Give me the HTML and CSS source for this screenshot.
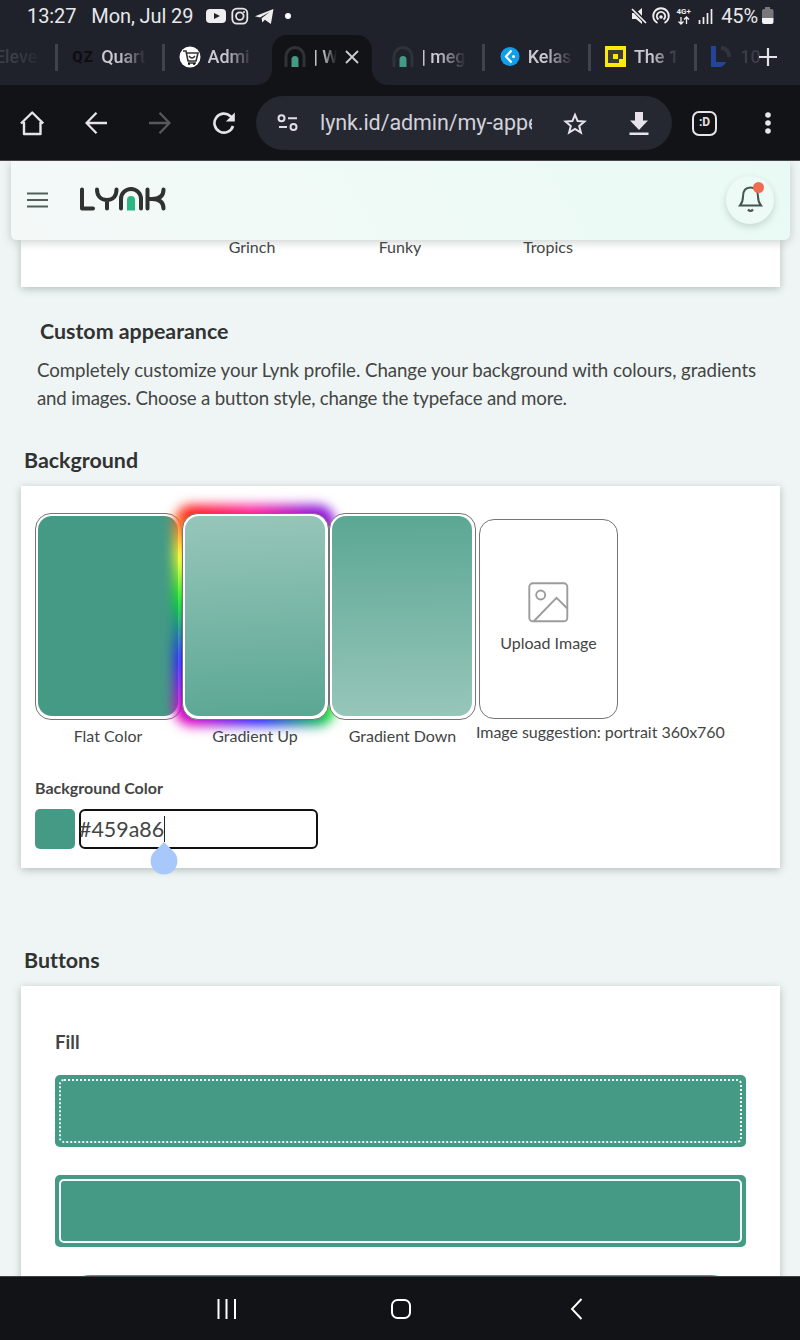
FILE: index.html
```html
<!DOCTYPE html>
<html lang="en">
<head>
<meta charset="utf-8">
<title>Lynk</title>
<link rel="stylesheet" href="styles.css">
</head>
<body>
<div class="phone">
  <header class="status">
    <span class="clock">13:27</span>
    <span class="date">Mon, Jul 29</span>
    <svg class="notif" width="90" height="20" viewBox="0 0 90 20">
      <rect x="0" y="3" width="20" height="14" rx="4" fill="#eee"/><path d="M8 7l6 3-6 3z" fill="#1f212b"/>
      <g fill="none" stroke="#e6e6e8" stroke-width="1.8"><rect x="26.300" y="2.600" width="15" height="15" rx="4.500"/><circle cx="33.800" cy="10.100" r="3.800"/></g><circle cx="38" cy="6" r="1" fill="#e6e6e8"/>
      <path d="M49 10.200L67.500 3l-2.600 15-6-4.200-2.600 2.600-.7-4.200 8-6.200-9.600 5.600z" fill="#eee"/>
      <circle cx="82" cy="10" r="3" fill="#fff"/>
    </svg>
    <svg class="radio" width="84" height="20" viewBox="0 0 84 20">
      <path d="M1 7h4l6-5v16l-6-5H1z" fill="#eee"/><path d="M0 1l15 16" stroke="#1f212b" stroke-width="4"/><path d="M1 3l14 14" stroke="#eee" stroke-width="1.700"/>
      <g fill="none" stroke="#eee" stroke-width="1.800"><path d="M26.500 17a7.800 7.800 0 1 1 7 0"/><path d="M27.500 13.500a4.200 4.200 0 1 1 5 0"/></g><circle cx="30" cy="11" r="1.800" fill="#eee"/>
      <path d="M50 11v7m-2.500-2.500L50 18l2.500-2.500M55.500 18v-7m-2.500 2.500l2.500-2.500 2.500 2.500" fill="none" stroke="#eee" stroke-width="1.300"/>
      <text x="45.500" y="8" class="net">4G+</text>
      <path d="M68.500 14v4M72.500 11v7M76.500 7v11M80.500 3v15" stroke="#eee" stroke-width="1.700"/>
    </svg>
    <span class="pct">45%</span>
    <svg class="batt" width="12" height="18" viewBox="0 0 12 18"><path d="M3 2V0h5v2h1.500a2 2 0 0 1 2 2v7H0V4a2 2 0 0 1 2-2z" fill="#77777c"/><path d="M0 11h11.500v4a2 2 0 0 1-2 2H2a2 2 0 0 1-2-2z" fill="#f4f4f4"/></svg>
  </header>

  <nav class="tabs">
    <div class="tab first"><span class="fav"></span><span class="name dim">Eleve</span></div>
    <div class="tab"><span class="fav qz">QZ</span><span class="name">Quart</span></div>
    <div class="tab"><svg class="fav" viewBox="0 0 22 22"><circle cx="11" cy="11" r="10.500" fill="#fff"/><path d="M4 5h3l2 10h8l2-8H7.500M9 17h8" fill="none" stroke="#333" stroke-width="1.600"/><circle cx="10" cy="18" r="1" /><circle cx="15" cy="18" r="1"/><path d="M10 10q3 4 6 0" fill="none" stroke="#333" stroke-width="1.300"/></svg><span class="name">Admi</span></div>
    <div class="tab active"><svg class="fav" viewBox="0 0 22 22"><path d="M2 21V10.500a9 9 0 0 1 18 0V21" fill="none" stroke="#303336" stroke-width="3"/><path d="M7.500 21v-7.500a3.500 3.500 0 0 1 7 0V21z" fill="#459a86"/></svg><span class="name short">| W</span><svg class="close" width="14" height="14" viewBox="0 0 14 14"><path d="M1 1l12 12M13 1L1 13" stroke="#ceced2" stroke-width="1.800"/></svg></div>
    <div class="tab plain"><svg class="fav" viewBox="0 0 22 22"><path d="M2 21V10.500a9 9 0 0 1 18 0V21" fill="none" stroke="#303336" stroke-width="3"/><path d="M7.500 21v-7.500a3.500 3.500 0 0 1 7 0V21z" fill="#459a86"/></svg><span class="name">| meg</span></div>
    <div class="tab"><svg class="fav" viewBox="0 0 22 22"><circle cx="11" cy="10.500" r="9.500" fill="#109fea"/><path d="M12.500 4.500L7 10.500l5.500 6" fill="none" stroke="#fff" stroke-width="2.200"/><circle cx="14.500" cy="10.500" r="1.500" fill="#fff"/></svg><span class="name">Kelas</span></div>
    <div class="tab"><svg class="fav" viewBox="0 0 22 22"><path fill="#fbe80c" d="M0 0h21v21H0z"/><path d="M3 4h15v9h-4v4H3z" fill="#3c3d31"/><path d="M8 8h5v5H8z" fill="#fbe80c"/></svg><span class="name">The 1</span></div>
    <div class="tab"><svg class="fav" viewBox="0 0 22 22"><path d="M0 0h5v16h10a8 8 0 0 1-6 5H0z" fill="#23449a"/><path d="M10 2a8 8 0 0 1 8 9" fill="none" stroke="#30343d" stroke-width="4"/></svg><span class="name dim">10</span></div>
    <svg class="plus" width="18" height="18" viewBox="0 0 18 18"><path d="M9 0v18M0 9h18" stroke="#e4e4e8" stroke-width="2.200"/></svg>
  </nav>

  <div class="toolbar">
    <svg class="t-home" width="24" height="26" viewBox="0 0 24 26"><path d="M4 12v12h16.500V12M1 13.500L12.200 2.500l11 11" fill="none" stroke="#e6e4ea" stroke-width="2.400" stroke-linejoin="round"/></svg>
    <svg class="t-back" width="22" height="22" viewBox="0 0 22 22"><path d="M11.500 .8L1.500 11l10 10.200M1.500 11H22" fill="none" stroke="#e6e4ea" stroke-width="2.300"/></svg>
    <svg class="t-fwd" width="22" height="22" viewBox="0 0 22 22"><path d="M10.500 .8l10 10.200-10 10.200M20.500 11H0" fill="none" stroke="#59595d" stroke-width="2.300"/></svg>
    <svg class="t-reload" width="22" height="22" viewBox="0 0 22 22"><path d="M20 14A9.500 9.500 0 1 1 17.500 4.200L20 7" fill="none" stroke="#e6e4ea" stroke-width="2.600"/><path d="M21.800 .5v9h-9z" fill="#e6e4ea"/></svg>
    <div class="omnibox">
      <svg class="tune" width="22" height="18" viewBox="0 0 22 18"><g fill="none" stroke="#e0dfe6" stroke-width="2"><circle cx="4.500" cy="4.300" r="3"/><path d="M11 4.300h9M2 13h8"/><circle cx="16.500" cy="13" r="3"/></g></svg>
      <span class="url">lynk.id/admin/my-appe</span>
      <svg class="star" width="24" height="24" viewBox="0 0 24 24"><path d="M12 2.800l2.600 6.300 6.800.5-5.200 4.400 1.700 6.600-5.900-3.600-5.900 3.600L7.800 14 2.600 9.600l6.800-.5z" fill="none" stroke="#e6e4ea" stroke-width="2"/></svg>
      <svg class="dl" width="20" height="24" viewBox="0 0 20 24"><path d="M6 0h8v8.500h5L10 18 1 8.500h5zM.5 20.500h19V23H.5z" fill="#e6e4ea"/></svg>
    </div>
    <div class="count">:D</div>
    <svg class="dots" width="6" height="22" viewBox="0 0 6 22"><g fill="#e8e6ec"><circle cx="3" cy="3" r="2.800"/><circle cx="3" cy="11" r="2.800"/><circle cx="3" cy="19" r="2.800"/></g></svg>
  </div>

  <main class="page">
    <div class="site-head">
      <svg class="burger" width="21" height="16" viewBox="0 0 21 16"><path d="M0 1.500h21M0 8h21M0 14.500h21" stroke="#52605b" stroke-width="2"/></svg>
      <svg class="logo" width="86" height="24" viewBox="0 0 86 24"><g fill="none" stroke="#303231" stroke-width="4" stroke-linecap="round" stroke-linejoin="round"><path d="M2 2.500V21.500H13"/><path d="M17 2.500C17 9 21 13 27 13S36.500 9 36.500 2.500M27 13v8.500"/><path d="M41 21.500V12a10 10 0 0 1 20 0v9.500"/><path d="M67.500 2.500v19M67.500 12H72C79 12 83.500 9 83.500 2.500M72 12c7 0 11.500 3 11.500 9.500"/></g><path d="M47 23.500V13a4 4 0 0 1 8 0v10.500z" fill="#2bb684"/></svg>
      <div class="bell">
        <svg width="26" height="30" viewBox="0 0 26 30"><path d="M2 21.500c2.500-3 3-5 3-9C5 6.500 8 3.500 12.500 3.500S20 6.500 20 12.500c0 4 .5 6 3 9z" fill="none" stroke="#43564f" stroke-width="2"/><path d="M10 25.500q2.500 3 5 0" fill="none" stroke="#43564f" stroke-width="2.200"/></svg>
        <i class="alert"></i>
      </div>
    </div>
    <section class="card themes"><span>Grinch</span><span>Funky</span><span>Tropics</span></section>
    <section class="intro">
      <h2>Custom appearance</h2>
      <p><span class="line-a">Completely customize your Lynk profile. Change your background with colours, gradients</span> <span class="line-b">and images. Choose a button style, change the typeface and more.</span></p>
    </section>
    <h2 class="heading bg-heading">Background</h2>
    <section class="card backgrounds">
      <div class="options">
        <div class="option"><div class="frame"><div class="fill flat"></div></div><span>Flat Color</span></div>
        <div class="option selected"><div class="frame"><div class="fill up"></div></div><span>Gradient Up</span></div>
        <div class="option"><div class="frame"><div class="fill down"></div></div><span>Gradient Down</span></div>
        <div class="upload">
          <div class="upload-box">
            <svg width="41" height="41" viewBox="0 0 41 41"><g fill="none" stroke="#9c9c9c" stroke-width="1.900"><rect x="1.300" y="1.300" width="38" height="38" rx="3.500"/><circle cx="12.700" cy="13" r="4.500"/><path d="M6 39L28.500 15.800 39.300 26.500"/></g></svg>
            <span>Upload Image</span>
          </div>
          <span class="hint">Image suggestion: portrait 360x760</span>
        </div>
      </div>
      <div class="label">Background Color</div>
      <div class="picker">
        <div class="swatch"></div>
        <div class="field"><span>#459a86</span><i class="caret"><svg class="handle" width="28" height="33" viewBox="0 0 28 33"><path d="M14 0l9.500 9.500a13.400 13.400 0 1 1-19 0z" fill="#a8c7fa"/></svg></i></div>
      </div>
    </section>
    <h2 class="heading btn-heading">Buttons</h2>
    <section class="card buttons">
      <h3>Fill</h3>
      <div class="btn dotted"><div></div></div>
      <div class="btn"><div></div></div>
      <div class="btn round"></div>
    </section>
  </main>

  <footer class="sysnav">
    <svg class="recent" width="20" height="20" viewBox="0 0 20 20"><path d="M1.500 0v20M9.500 0v20M18 0v20" stroke="#fff" stroke-width="2"/></svg>
    <svg class="homebtn" width="22" height="22" viewBox="0 0 22 22"><rect x="2" y="2" width="18" height="18" rx="5.500" fill="none" stroke="#fff" stroke-width="2"/></svg>
    <svg class="backbtn" width="13" height="22" viewBox="0 0 13 22"><path d="M11.500 1L2 11l9.500 10" fill="none" stroke="#fff" stroke-width="1.900"/></svg>
  </footer>
</div>
</body>
</html>
```
FILE: styles.css
```css
* { box-sizing: border-box; }
body { margin: 0; background: #121316; }
svg { display: block; flex: none; }
h2, h3, p { margin: 0; }
.phone { width: 800px; height: 1340px; display: flex; flex-direction: column; overflow: hidden; font-family: Lato, sans-serif; font-variant-ligatures: none; color: #434545; }

.status { flex: none; height: 32px; background: #1f212b; display: flex; align-items: center; padding: 0 26px 0 27px; font: 20px/32px Roboto, sans-serif; letter-spacing: -.1px; color: #e8e8ea; }
.date { margin-left: 15px; }
.notif { margin-left: 13px; }
.radio { margin-left: auto; }
.net { font: 700 8px Roboto, sans-serif; fill: #eee; letter-spacing: 0; }
.pct { margin-left: 6px; }
.batt { margin-left: 4px; }

.tabs { flex: none; position: relative; height: 53px; background: #1f212b; display: flex; overflow: hidden; }
.tab { flex: none; width: 106.300px; height: 53px; display: flex; align-items: center; padding: 0 0 3px 14px; position: relative; }
.tab::before { content: ""; position: absolute; left: 0; top: 12px; width: 3px; height: 27px; background: #41434a; }
.tab.first { margin-left: -51px; }
.tab.active::before, .tab.plain::before { display: none; }
.tab .fav { flex: none; width: 22px; height: 22px; margin: 0 7px 0 3px; }
.tab .qz { font: 700 15px/22px Roboto, sans-serif; color: #0c0d10; letter-spacing: 1px; }
.name { width: 45px; overflow: hidden; white-space: nowrap; font: 500 18px/24px Roboto, sans-serif; letter-spacing: -.1px; color: #c9c9cf; -webkit-mask-image: linear-gradient(90deg, #000 40%, transparent); mask-image: linear-gradient(90deg, #000 40%, transparent); }
.name.dim { color: #3b3e47; }
.first .name { width: 52px; }
.name.short { width: 24px; }
.tab.active { width: 100px; margin: 3px 3px 0 4.500px; padding: 0 0 6px 9px; height: 50px; background: #121316; border-radius: 15px 15px 0 0; }
.tab.active .close { margin-left: 8px; }
.tab.active::after { content: ""; position: absolute; left: -15px; right: -15px; bottom: 0; height: 15px; background: radial-gradient(circle at 0 0, transparent 14.500px, #121316 15px) left / 15px 15px no-repeat, radial-gradient(circle at 100% 0, transparent 14.500px, #121316 15px) right / 15px 15px no-repeat; }
.plus { position: absolute; left: 759px; top: 16px; }

.toolbar { flex: none; height: 76px; background: #121316; border-bottom: 1px solid #48454c; display: flex; align-items: center; padding: 1px 29px 0 20px; }
.t-back { margin-left: 41px; }
.t-fwd { margin-left: 42px; }
.t-reload { margin-left: 42px; }
.omnibox { margin: 0 0 1px 21px; width: 416px; height: 54px; border-radius: 27px; background: #252831; display: flex; align-items: center; padding-left: 21px; }
.url { width: 212px; margin-left: 21px; overflow: hidden; white-space: nowrap; font: 21.500px/30px Roboto, sans-serif; letter-spacing: -.08px; color: #d3d2da; }
.star { margin: 3px 0 0 31px; }
.dl { margin: 2px 0 0 42px; }
.count { width: 25px; height: 25px; margin-left: 20px; border: 2.500px solid #e6e4ea; border-radius: 7px; font: 700 12px/19px Roboto, sans-serif; text-align: center; color: #e6e4ea; }
.dots { margin-left: auto; }

.page { position: relative; flex: none; height: 1115px; overflow: hidden; background: #eff5f4; }
.site-head { position: relative; z-index: 3; height: 79px; margin: 0 10px 0 11px; padding: 0 16px 2px; display: flex; align-items: center; border-radius: 0 0 6px 6px; background: linear-gradient(60deg, #f4f9f8, #e9faf4); box-shadow: 0 2px 10px rgba(60, 90, 80, .28); }
.logo { margin: 0 0 1px 32px; }
.bell { position: relative; width: 48px; height: 48px; margin-left: auto; border-radius: 50%; background: #edfaf6; box-shadow: 0 3px 7px rgba(40, 80, 65, .2); padding: 8px 0 0 12px; }
.alert { position: absolute; left: 27px; top: 6px; width: 11px; height: 11px; border-radius: 50%; background: #ed6c52; }
.card { margin: 0 20px 0 21px; background: #fff; box-shadow: 0 2px 8px rgba(50, 80, 70, .32); }
.themes { height: 47px; padding: 0 132px 0 157px; display: flex; font-size: 16px; line-height: 14px; }
.themes span { width: 148px; text-align: center; }
.intro { padding: 30px 20px 0 37px; }
.intro h2 { padding-left: 3px; }
h2 { font-size: 21.400px; line-height: 28px; color: #313333; }
.intro p { margin-top: 11px; font-size: 18.700px; line-height: 28px; }
.line-a { letter-spacing: -.06px; }
.line-b { letter-spacing: -.19px; }
.heading { margin-left: 24px; }
.bg-heading { margin-top: 34px; margin-bottom: 12px; }

.backgrounds { height: 382px; padding: 27px 14px 0; }
.options { display: flex; height: 233px; }
.option { width: 147px; flex: none; font-size: 16px; line-height: 20px; text-align: center; position: relative; }
.option > span { display: block; margin: 6px 1px 0 0; position: relative; }
.option:nth-child(3) > span { margin-right: 0; }
.frame { position: relative; width: 147px; height: 207px; padding: 2px; border: 1px solid #757575; border-radius: 16px; }
.fill { width: 140px; height: 200px; border-radius: 14px; }
.flat { background: #459a86; }
.up { background: linear-gradient(177deg, #97c6ba, #5ba794); }
.down { background: linear-gradient(179deg, #5ba794, #97c6ba); }
.selected .frame, .option:nth-child(3) .frame { background: #fff; }
.selected::before { content: ""; position: absolute; left: -8px; top: -8px; width: 161px; height: 221px; border-radius: 18px; filter: blur(6px); background: linear-gradient(37deg, #e000c0 5%, #2222ff 21%, #00e020 38%, #ffff20 51%, #ff1818 66%, #ff1a9a 80%, #8a12d8 94%); }
.upload { width: 260px; }
.upload-box { margin: 6px 0 0 3px; width: 139px; height: 200px; border: 1px solid #757575; border-radius: 15px; padding-top: 62px; display: flex; flex-direction: column; align-items: center; gap: 9px; font-size: 16px; line-height: 22px; }
.hint { display: block; margin-top: 3px; font-size: 16px; line-height: 20px; white-space: nowrap; letter-spacing: -.04px; }
.label { margin-top: 32px; font-size: 16px; line-height: 20px; font-weight: 700; height: 31px; }
.picker { display: flex; gap: 4px; }
.swatch { width: 40px; height: 40px; border-radius: 5px; background: #459a86; }
.field { width: 239px; height: 40px; border: 2px solid #111; border-radius: 6px; display: flex; align-items: center; font-size: 21.400px; line-height: 26px; }
.field span { margin-left: -2px; }
.caret { position: relative; width: 1px; height: 26px; background: #222; }
.handle { position: absolute; left: -14px; top: 26px; }
.btn-heading { margin-top: 78px; margin-bottom: 12px; }
.buttons { height: 400px; padding: 42px 34px 0; }
h3 { font-size: 18.700px; line-height: 28px; margin-bottom: 19px; color: #434545; }
.btn { height: 72px; margin-bottom: 28px; padding: 4px; border-radius: 5px; background: #459a86; }
.btn div { height: 64px; border: 2px solid #f2fbf9; border-radius: 5px; }
.btn.dotted div { border-style: dotted; }
.btn.round { border-radius: 36px; }

.sysnav { flex: none; height: 64px; background: #121316; border-top: 1px solid #3c4446; display: flex; align-items: center; padding-left: 217px; }
.homebtn { margin-left: 153px; }
.backbtn { margin-left: 158px; }
```
